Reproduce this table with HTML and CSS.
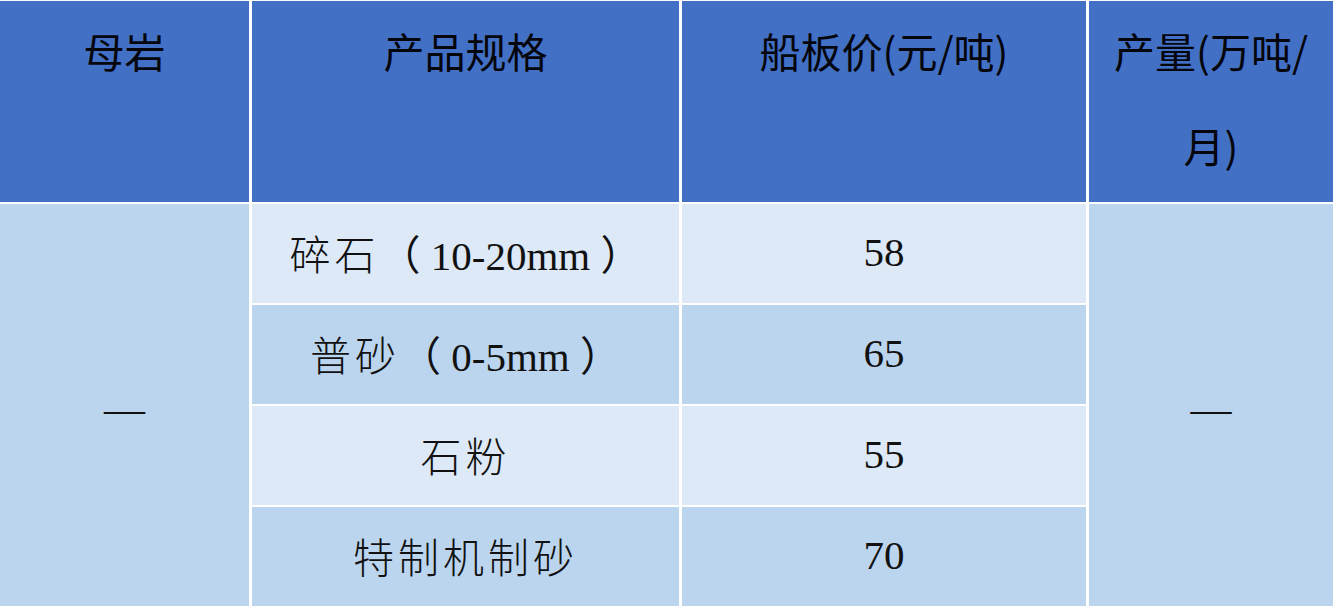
FILE: index.html
```html
<!DOCTYPE html>
<html lang="zh-CN">
<head>
<meta charset="utf-8">
<title>价格表</title>
<link rel="stylesheet" href="styles.css">
</head>
<body>
<div class="table">
  <div class="cell head">母岩</div>
  <div class="cell head">产品规格</div>
  <div class="cell head">船板价(元/吨)</div>
  <div class="cell head">产量(万吨/<br>月)</div>

  <div class="cell merged col1">—</div>

  <div class="cell light"><span class="cjk">碎石</span>（ 10-20mm ）</div>
  <div class="cell light">58</div>

  <div class="cell mid"><span class="cjk">普砂</span>（ 0-5mm ）</div>
  <div class="cell mid">65</div>

  <div class="cell light"><span class="cjk">石粉</span></div>
  <div class="cell light">55</div>

  <div class="cell mid"><span class="cjk">特制机制砂</span></div>
  <div class="cell mid">70</div>

  <div class="cell merged col4">—</div>
</div>
</body>
</html>
```

FILE: styles.css
```css
html, body {
  margin: 0;
  padding: 0;
  background: #ffffff;
}

.table {
  display: grid;
  grid-template-columns: 249px 427px 404px 244px;
  grid-template-rows: 201px repeat(4, 99px);
  column-gap: 3px;
  row-gap: 2px;
  padding-top: 1px;
  width: 1333px;
  background: #ffffff;
}

.cell {
  display: flex;
  align-items: center;
  justify-content: center;
  text-align: center;
  color: #111111;
  font-family: "Liberation Serif", "Noto Sans CJK SC", serif;
  font-size: 41px;
  box-sizing: border-box;
}

.head {
  align-items: flex-start;
  background: #4270c5;
  font-family: "Noto Sans CJK SC", sans-serif;
  font-weight: 400;
  font-size: 41px;
  line-height: 95px;
  padding-top: 2px;
  color: #05050c;
}

.light {
  background: #dde9f7;
  padding-bottom: 4px;
}

.mid {
  background: #bcd5ef;
  padding-bottom: 4px;
}

.merged {
  background: #bcd5ef;
  grid-row: 2 / 6;
  padding-top: 6px;
}

.col1 {
  grid-column: 1;
}

.col4 {
  grid-column: 4;
}

.cjk {
  font-family: "Noto Sans CJK SC", sans-serif;
  font-weight: 300;
  letter-spacing: 4px;
}
```
